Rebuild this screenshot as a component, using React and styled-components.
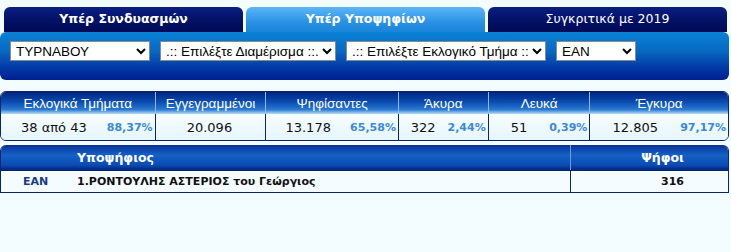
import styled, { createGlobalStyle } from "styled-components";

const GlobalStyle = createGlobalStyle`
  html, body {
    margin: 0;
    padding: 0;
    background: #f3fcff;
    font-family: "DejaVu Sans", Verdana, sans-serif;
  }
`;

const tabs = [
  { label: "Υπέρ Συνδυασμών", active: false, bold: true },
  { label: "Υπέρ Υποψηφίων", active: true, bold: true },
  { label: "Συγκριτικά με 2019", active: false, bold: false },
];

const selects = [
  { width: 140, value: "ΤΥΡΝΑΒΟΥ" },
  { width: 176, value: ".:: Επιλέξτε Διαμέρισμα ::.." },
  { width: 200, value: ".:: Επιλέξτε Εκλογικό Τμήμα ::." },
  { width: 80, value: "ΕΑΝ" },
];

const stats = [
  { title: "Εκλογικά Τμήματα", width: 154, value: "38 από 43", pct: "88,37%" },
  { title: "Εγγεγραμμένοι", width: 111, value: "20.096" },
  { title: "Ψηφίσαντες", width: 133, value: "13.178", pct: "65,58%" },
  { title: "Άκυρα", width: 90, value: "322", pct: "2,44%" },
  { title: "Λευκά", width: 102, value: "51", pct: "0,39%" },
  { title: "Έγκυρα", width: 139, value: "12.805", pct: "97,17%" },
];

function App() {
  return (
    <Page>
      <GlobalStyle />
      <TabBar>
        {tabs.map((t) => (
          <Tab key={t.label} $active={t.active} $bold={t.bold}>{t.label}</Tab>
        ))}
      </TabBar>
      <FilterPanel>
        {selects.map((s) => (
          <Select key={s.value} $width={s.width} defaultValue={s.value}>
            <option>{s.value}</option>
          </Select>
        ))}
      </FilterPanel>

      <StatsTable>
        <StatsRow>
          {stats.map((s) => (
            <StatHead key={s.title} $width={s.width}>{s.title}</StatHead>
          ))}
        </StatsRow>
        <StatsRow>
          {stats.map((s) => (
            <StatCell key={s.title} $width={s.width}>
              <StatValue>{s.value}</StatValue>
              {s.pct && <StatPct>{s.pct}</StatPct>}
            </StatCell>
          ))}
        </StatsRow>
      </StatsTable>

      <CandTable>
        <CandHeader>
          <PartyCol />
          <NameCol>Υποψήφιος</NameCol>
          <VotesCol>Ψήφοι</VotesCol>
        </CandHeader>
        <CandRow>
          <PartyCol>ΕΑΝ</PartyCol>
          <NameCol>1.ΡΟΝΤΟΥΛΗΣ ΑΣΤΕΡΙΟΣ του Γεώργιος</NameCol>
          <VotesCol $divider>316</VotesCol>
        </CandRow>
      </CandTable>
    </Page>
  );
}

export default App;

const Page = styled.div`
  width: 731px;
  height: 252px;
  padding-top: 7px;
  box-sizing: border-box;
`;

const TabBar = styled.div`
  display: flex;
  gap: 3px;
  padding-left: 4px;
`;

const Tab = styled.div`
  width: 239px;
  height: 25px;
  box-sizing: border-box;
  border-radius: 6px 6px 0 0;
  display: flex;
  justify-content: center;
  padding-top: 4px;
  color: #fff;
  font-size: 12.5px;
  font-weight: ${(p) => (p.$bold ? "bold" : "normal")};
  background: ${(p) =>
    p.$active
      ? "linear-gradient(#5cb6f6, #2a92e4 60%, #1a84d8)"
      : "linear-gradient(#0a1f82, #031268 50%, #000a55)"};
`;

const FilterPanel = styled.div`
  width: 729px;
  height: 48px;
  box-sizing: border-box;
  border-radius: 6px;
  padding: 9px 10px 0;
  display: flex;
  gap: 10px;
  align-items: flex-start;
  background: linear-gradient(#0a82d6, #0868c2 40%, #0238a6 75%, #00208e);
`;

const Select = styled.select`
  width: ${(p) => p.$width}px;
  height: 20px;
  border: 1px solid #8a8a8a;
  border-radius: 0;
  background: #fff;
  color: #000;
  font-family: "Liberation Sans", Arial, sans-serif;
  font-size: 13.5px;
  padding: 0 0 0 1px;
`;

const StatsTable = styled.div`
  margin-top: 11px;
  width: 729px;
  border: 1px solid #0a2470;
  border-radius: 6px;
  overflow: hidden;
  box-sizing: border-box;
`;

const StatsRow = styled.div`
  display: flex;
`;

const StatHead = styled.div`
  width: ${(p) => p.$width}px;
  height: 22px;
  box-sizing: border-box;
  display: flex;
  justify-content: center;
  align-items: center;
  color: #fff;
  font-family: "Liberation Sans", Arial, sans-serif;
  font-size: 13.5px;
  border-left: 1px solid #8fb8e8;
  &:first-child { border-left: none; }
  background: linear-gradient(#00247e, #0a4cb0 45%, #2a7ad2 80%, #b8dcf6);
`;

const StatCell = styled.div`
  width: ${(p) => p.$width}px;
  height: 26px;
  box-sizing: border-box;
  display: flex;
  align-items: center;
  padding-right: 2px;
  border-left: 1px solid #0a2470;
  &:first-child { border-left: none; }
  background: linear-gradient(#f6fdff, #e6f6fd);
`;

const StatValue = styled.span`
  flex: 1;
  text-align: center;
  font-size: 13px;
  color: #111;
`;

const StatPct = styled.span`
  font-size: 11px;
  font-weight: bold;
  color: #3a8ad6;
`;

const CandTable = styled.div`
  margin-top: 4px;
  width: 729px;
  border: 1px solid #0a2470;
  border-top: none;
  border-radius: 6px 6px 0 0;
  overflow: hidden;
  box-sizing: border-box;
`;

const CandHeader = styled.div`
  display: flex;
  height: 25px;
  align-items: center;
  color: #fff;
  font-size: 12.5px;
  font-weight: bold;
  background: linear-gradient(#0a2f96, #1462c6 40%, #0a4cb4 80%, #04247e);
  border-bottom: 1px solid #0a2470;
`;

const CandRow = styled.div`
  display: flex;
  height: 21px;
  align-items: center;
  font-size: 11px;
  font-weight: bold;
  color: #111;
  background: #f4fcff;
`;

const PartyCol = styled.div`
  width: 76px;
  box-sizing: border-box;
  padding-left: 22px;
  color: #1a3a86;
`;

const NameCol = styled.div`
  width: 493px;
`;

const VotesCol = styled.div`
  flex: 1;
  align-self: stretch;
  display: flex;
  align-items: center;
  justify-content: flex-end;
  padding-right: 44px;
  border-left: 1px solid ${(p) => (p.$divider ? "#0a2470" : "#6e9ad8")};
`;
